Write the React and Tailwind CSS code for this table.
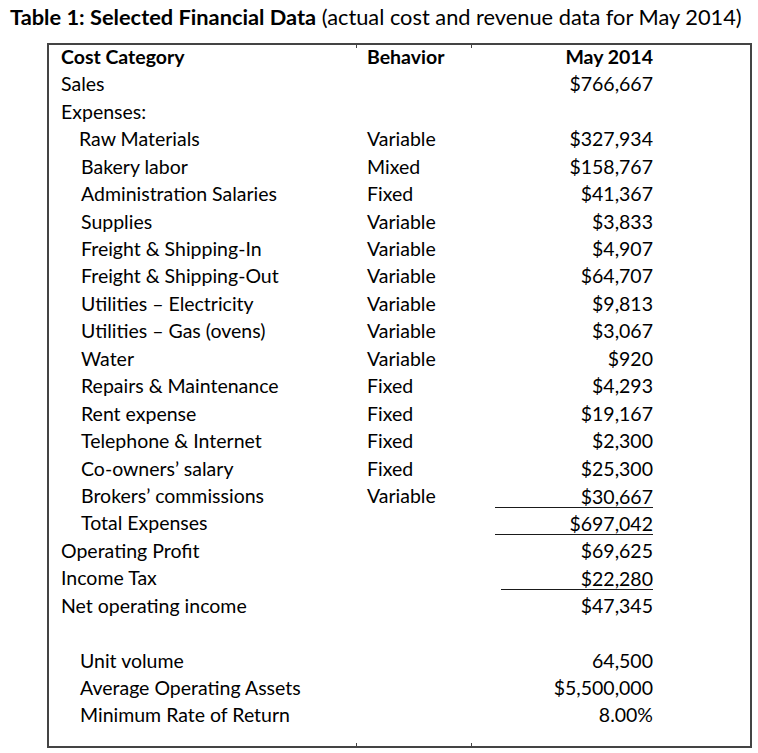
const rows = [
  { label: "Sales", amount: "$766,667" },
  { label: "Expenses:" },
  { label: "Raw Materials", indent: "pl-[18px]", behavior: "Variable", amount: "$327,934" },
  { label: "Bakery labor", indent: "pl-[20px]", behavior: "Mixed", amount: "$158,767" },
  { label: "Administration Salaries", indent: "pl-[20px]", behavior: "Fixed", amount: "$41,367" },
  { label: "Supplies", indent: "pl-[20px]", behavior: "Variable", amount: "$3,833" },
  { label: "Freight & Shipping-In", indent: "pl-[20px]", behavior: "Variable", amount: "$4,907" },
  { label: "Freight & Shipping-Out", indent: "pl-[20px]", behavior: "Variable", amount: "$64,707" },
  { label: "Utilities – Electricity", indent: "pl-[20px]", behavior: "Variable", amount: "$9,813" },
  { label: "Utilities – Gas (ovens)", indent: "pl-[20px]", behavior: "Variable", amount: "$3,067" },
  { label: "Water", indent: "pl-[20px]", behavior: "Variable", amount: "$920" },
  { label: "Repairs & Maintenance", indent: "pl-[20px]", behavior: "Fixed", amount: "$4,293" },
  { label: "Rent expense", indent: "pl-[20px]", behavior: "Fixed", amount: "$19,167" },
  { label: "Telephone & Internet", indent: "pl-[20px]", behavior: "Fixed", amount: "$2,300" },
  { label: "Co-owners’ salary", indent: "pl-[20px]", behavior: "Fixed", amount: "$25,300" },
  { label: "Brokers’ commissions", indent: "pl-[20px]", behavior: "Variable", amount: "$30,667", line: "w-[158px]" },
  { label: "Total Expenses", indent: "pl-[20px]", amount: "$697,042", line: "w-[159px]" },
  { label: "Operating Profit", amount: "$69,625" },
  { label: "Income Tax", amount: "$22,280", line: "w-[152px]" },
  { label: "Net operating income", amount: "$47,345" },
];

const extras = [
  { label: "Unit volume", amount: "64,500" },
  { label: "Average Operating Assets", amount: "$5,500,000" },
  { label: "Minimum Rate of Return", amount: "8.00%" },
];

function Row({ label, indent = "", behavior, amount, line, bold }) {
  return (
    <div className={`grid grid-cols-[306px_128px_158px] h-[27.45px] items-center ${bold ? "font-bold" : ""}`}>
      <div className={indent}>{label}</div>
      <div>{behavior}</div>
      <div className="flex justify-end">
        {line ? (
          <div className={`${line} text-right leading-[21px] border-b-[1.5px] border-[#1a1a1a] translate-y-[1px]`}>
            {amount}
          </div>
        ) : (
          <div>{amount}</div>
        )}
      </div>
    </div>
  );
}

export default function App() {
  return (
    <div className="w-[758px] h-[753px] bg-white text-black font-['Lato',sans-serif] text-[19.5px]">
      <h1 className="pl-[10px] pt-[5px] leading-[24px] text-[21.8px]">
        <span className="font-bold">Table 1: Selected Financial Data</span> (actual cost and revenue data for May 2014)
      </h1>

      {/* Table box */}
      <div className="relative mt-[14px] ml-[47px] w-[705px] h-[705px] border-2 border-[#444444] pl-[12px] leading-none">
        <span className="absolute top-0 left-[307px] w-px h-[3px] bg-[#444444]" />
        <span className="absolute top-0 left-[422px] w-px h-[3px] bg-[#444444]" />
        <span className="absolute bottom-0 left-[307px] w-px h-[3px] bg-[#444444]" />
        <span className="absolute bottom-0 left-[422px] w-px h-[3px] bg-[#444444]" />

        <div className="-mt-[2px]">
          <Row label="Cost Category" behavior="Behavior" amount="May 2014" bold />
          {rows.map((r) => (
            <Row key={r.label} {...r} />
          ))}
          <div className="h-[27.45px]" />
          {extras.map((r) => (
            <Row key={r.label} indent="pl-[19px]" {...r} />
          ))}
        </div>
      </div>
    </div>
  );
}
